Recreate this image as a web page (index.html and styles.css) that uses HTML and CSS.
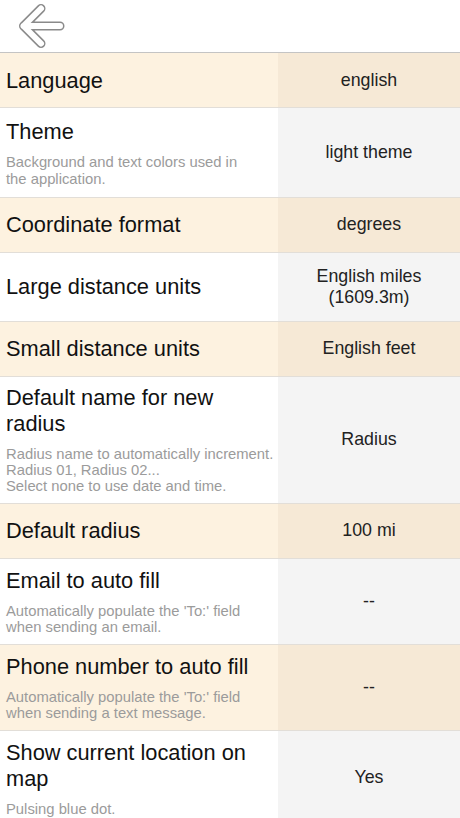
FILE: index.html
```html
<!DOCTYPE html>
<html>
<head>
<meta charset="utf-8">
<link rel="stylesheet" href="styles.css">
</head>
<body>
<header class="topbar">
  <svg class="back" width="60" height="52" viewBox="0 0 60 52">
    <path d="M31 8.5 L13.5 26 L31 43.5 M13.5 26 H50" fill="none" stroke="#8a8a8a" stroke-width="9" stroke-linecap="round" stroke-linejoin="round"/>
    <path d="M31 8.5 L13.5 26 L31 43.5 M13.5 26 H50" fill="none" stroke="#ffffff" stroke-width="6" stroke-linecap="round" stroke-linejoin="round"/>
  </svg>
</header>
<main class="list">
  <div class="row alt">
    <div class="label"><div class="title">Language</div></div>
    <div class="value">english</div>
  </div>
  <div class="row roomy">
    <div class="label"><div class="title">Theme</div><div class="sub">Background and text colors used in<br>the application.</div></div>
    <div class="value">light theme</div>
  </div>
  <div class="row alt">
    <div class="label"><div class="title">Coordinate format</div></div>
    <div class="value">degrees</div>
  </div>
  <div class="row">
    <div class="label"><div class="title">Large distance units</div></div>
    <div class="value">English miles<br>(1609.3m)</div>
  </div>
  <div class="row alt">
    <div class="label"><div class="title">Small distance units</div></div>
    <div class="value">English feet</div>
  </div>
  <div class="row tight">
    <div class="label"><div class="title">Default name for new<br>radius</div><div class="sub">Radius name to automatically increment.<br>Radius 01, Radius 02...<br>Select none to use date and time.</div></div>
    <div class="value">Radius</div>
  </div>
  <div class="row alt">
    <div class="label"><div class="title">Default radius</div></div>
    <div class="value">100 mi</div>
  </div>
  <div class="row">
    <div class="label"><div class="title">Email to auto fill</div><div class="sub">Automatically populate the 'To:' field<br>when sending an email.</div></div>
    <div class="value">--</div>
  </div>
  <div class="row alt">
    <div class="label"><div class="title">Phone number to auto fill</div><div class="sub">Automatically populate the 'To:' field<br>when sending a text message.</div></div>
    <div class="value">--</div>
  </div>
  <div class="row">
    <div class="label"><div class="title">Show current location on<br>map</div><div class="sub">Pulsing blue dot.</div></div>
    <div class="value">Yes</div>
  </div>
</main>
</body>
</html>
```
FILE: styles.css
```css
html, body {
  margin: 0;
  padding: 0;
  background: #ffffff;
  font-family: "Liberation Sans", Arial, sans-serif;
  color: #111111;
}

.topbar {
  height: 52px;
  border-bottom: 1px solid #c4c4c4;
  display: flex;
  align-items: flex-start;
  padding-left: 10px;
}

.back {
  display: block;
}

.list {
  display: flex;
  flex-direction: column;
}

.row {
  display: flex;
  min-height: 54px;
  border-bottom: 1px solid #e2ded8;
  background: #ffffff;
}

.label {
  flex: 0 0 278px;
  box-sizing: border-box;
  padding: 9px 4px 8px 6px;
  display: flex;
  flex-direction: column;
  justify-content: center;
}

.title {
  font-size: 21.8px;
  line-height: 26px;
  color: #111111;
  white-space: nowrap;
}

.sub {
  margin-top: 9px;
  font-size: 14.8px;
  line-height: 16.5px;
  color: #9b9b9b;
  white-space: nowrap;
}

.row.roomy .label {
  padding-top: 11px;
}

.row.roomy .sub {
  line-height: 17.4px;
}

.row.tight .label {
  padding-top: 8px;
}

.row.tight .sub {
  line-height: 16.3px;
}

.value {
  flex: 1;
  background: #f4f4f4;
  display: flex;
  align-items: center;
  justify-content: center;
  text-align: center;
  font-size: 17.8px;
  line-height: 21px;
  color: #222222;
  padding: 13px 10px;
}

.row.alt {
  background: #fdf2e0;
}

.row.alt .value {
  background: #f6e9d6;
}
```
